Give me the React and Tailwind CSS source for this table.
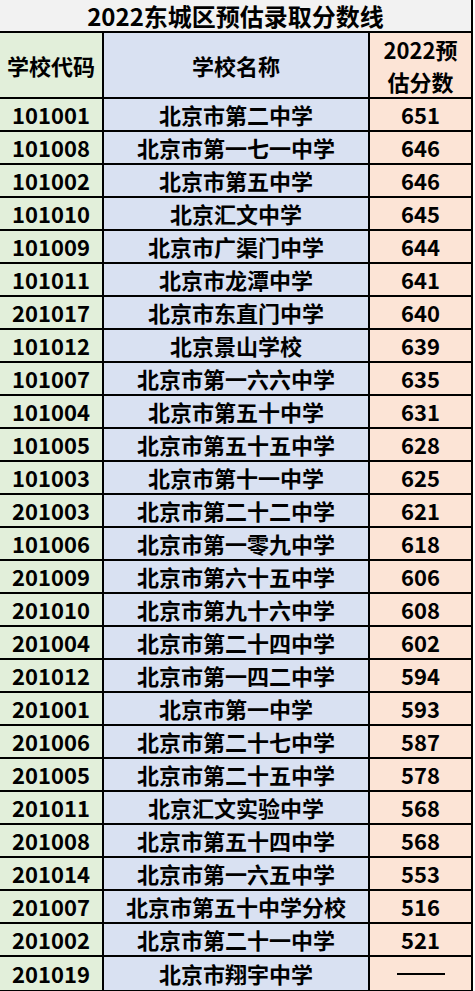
const rows = [
  ["101001", "北京市第二中学", "651"],
  ["101008", "北京市第一七一中学", "646"],
  ["101002", "北京市第五中学", "646"],
  ["101010", "北京汇文中学", "645"],
  ["101009", "北京市广渠门中学", "644"],
  ["101011", "北京市龙潭中学", "641"],
  ["201017", "北京市东直门中学", "640"],
  ["101012", "北京景山学校", "639"],
  ["101007", "北京市第一六六中学", "635"],
  ["101004", "北京市第五十中学", "631"],
  ["101005", "北京市第五十五中学", "628"],
  ["101003", "北京市第十一中学", "625"],
  ["201003", "北京市第二十二中学", "621"],
  ["101006", "北京市第一零九中学", "618"],
  ["201009", "北京市第六十五中学", "606"],
  ["201010", "北京市第九十六中学", "608"],
  ["201004", "北京市第二十四中学", "602"],
  ["201012", "北京市第一四二中学", "594"],
  ["201001", "北京市第一中学", "593"],
  ["201006", "北京市第二十七中学", "587"],
  ["201005", "北京市第二十五中学", "578"],
  ["201011", "北京汇文实验中学", "568"],
  ["201008", "北京市第五十四中学", "568"],
  ["201014", "北京市第一六五中学", "553"],
  ["201007", "北京市第五十中学分校", "516"],
  ["201002", "北京市第二十一中学", "521"],
  ["201019", "北京市翔宇中学", "——"],
];

const font = { fontFamily: '"Noto Sans CJK SC", "Noto Sans", sans-serif' };

export default function App() {
  return (
    <div className="w-[475px] bg-white text-black font-bold" style={font}>
      <div className="w-[473px] border-r-2 border-b-2 border-black">
        <div className="h-[33px] bg-[#f2f2f2] border-b-2 border-black flex items-center justify-center text-[24px] leading-[31px]">
          2022东城区预估录取分数线
        </div>
        <div className="grid grid-cols-[104px_266px_1fr] h-[66px] border-b-2 border-black text-[22px] leading-[32px]">
          <div className="bg-[#e2efda] border-r-2 border-black flex items-center justify-center">学校代码</div>
          <div className="bg-[#d9e1f2] border-r-2 border-black flex items-center justify-center">学校名称</div>
          <div className="bg-[#fce4d6] flex flex-col items-center justify-center">
            <span>2022预</span>
            <span>估分数</span>
          </div>
        </div>
        {rows.map((r, i) => (
          <div
            key={r[0] + i}
            className={`grid grid-cols-[104px_266px_1fr] h-[33px] text-[22px] leading-[31px] ${i < rows.length - 1 ? "border-b-2 border-black" : ""}`}
          >
            <div className="bg-[#e2efda] border-r-2 border-black flex items-center justify-center">{r[0]}</div>
            <div className="bg-[#d9e1f2] border-r-2 border-black flex items-center justify-center">{r[1]}</div>
            <div className="bg-[#fce4d6] flex items-center justify-center">
              {r[2] === "——" ? <span className="block w-[48px] h-[2px] bg-black"></span> : r[2]}
            </div>
          </div>
        ))}
      </div>
    </div>
  );
}
